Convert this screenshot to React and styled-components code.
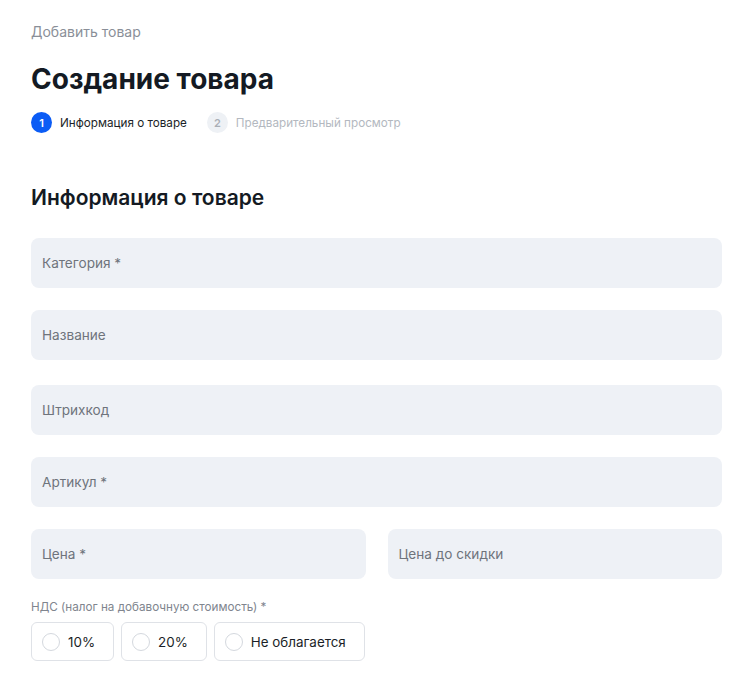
import React from "react";
import styled, { createGlobalStyle } from "styled-components";

const GlobalStyle = createGlobalStyle`
  * {
    box-sizing: border-box;
  }

  body {
    margin: 0;
    background: #fff;
    font-family: Inter, "Noto Sans", sans-serif;
    color: #1b1f27;
  }
`;

const Page = styled.div`
  width: 756px;
  padding: 22px 34px 20px 31px;
`;

const Breadcrumb = styled.div`
  font-size: 14px;
  line-height: 20px;
  color: #8a8f98;
`;

const Title = styled.h1`
  margin: 20px 0 0;
  font-size: 28px;
  line-height: 34px;
  font-weight: 700;
  color: #141a23;
`;

const Steps = styled.div`
  display: flex;
  align-items: center;
  gap: 20px;
  margin-top: 16px;
`;

const Step = styled.div`
  display: flex;
  align-items: center;
  gap: 8px;
  font-size: 11.7px;
  color: ${({ $active }) => ($active ? "#1b1f27" : "#b3b8c0")};
`;

const StepNumber = styled.span`
  display: flex;
  align-items: center;
  justify-content: center;
  width: 21px;
  height: 21px;
  border-radius: 50%;
  font-size: 11px;
  font-weight: 600;
  color: ${({ $active }) => ($active ? "#fff" : "#a9aeb6")};
  background: ${({ $active }) => ($active ? "#0b5cf5" : "#eef1f5")};
`;

const SectionTitle = styled.h2`
  margin: 51px 0 0;
  font-size: 21px;
  line-height: 28px;
  font-weight: 600;
  color: #141a23;
`;

const Fields = styled.div`
  display: flex;
  flex-direction: column;
  gap: 22px;
  margin-top: 26px;
`;

const Row = styled.div`
  display: grid;
  grid-template-columns: 1fr 1fr;
  gap: 22px;
`;

const Field = styled.div`
  display: flex;
  align-items: center;
  height: 50px;
  margin-top: ${({ $spaced }) => ($spaced ? "3px" : "0")};
  padding: 0 11px;
  border-radius: 8px;
  background: #eef1f6;
  font-size: 13.6px;
  color: #6f747c;
`;

const VatLabel = styled.div`
  margin-top: 20px;
  font-size: 11.7px;
  line-height: 16px;
  color: #80858e;
`;

const Options = styled.div`
  display: flex;
  gap: 7px;
  margin-top: 7px;
`;

const Option = styled.label`
  display: flex;
  align-items: center;
  gap: 8px;
  height: 39px;
  padding: 0 18px 0 10px;
  border: 1px solid #dfe2e7;
  border-radius: 6px;
  font-size: 13.4px;
  color: #1b1f27;
`;

const Radio = styled.span`
  width: 18px;
  height: 18px;
  border-radius: 50%;
  border: 1px solid #d4d8de;
`;

const App = () => {
  return (
    <Page>
      <GlobalStyle />
      <Breadcrumb>Добавить товар</Breadcrumb>
      <Title>Создание товара</Title>
      <Steps>
        <Step $active>
          <StepNumber $active>1</StepNumber>
          Информация о товаре
        </Step>
        <Step>
          <StepNumber>2</StepNumber>
          Предварительный просмотр
        </Step>
      </Steps>

      <SectionTitle>Информация о товаре</SectionTitle>
      <Fields>
        <Field>Категория *</Field>
        <Field>Название</Field>
        <Field $spaced>Штрихкод</Field>
        <Field>Артикул *</Field>
        <Row>
          <Field>Цена *</Field>
          <Field>Цена до скидки</Field>
        </Row>
      </Fields>

      <VatLabel>НДС (налог на добавочную стоимость) *</VatLabel>
      <Options>
        <Option>
          <Radio />
          10%
        </Option>
        <Option>
          <Radio />
          20%
        </Option>
        <Option>
          <Radio />
          Не облагается
        </Option>
      </Options>
    </Page>
  );
};

export default App;
